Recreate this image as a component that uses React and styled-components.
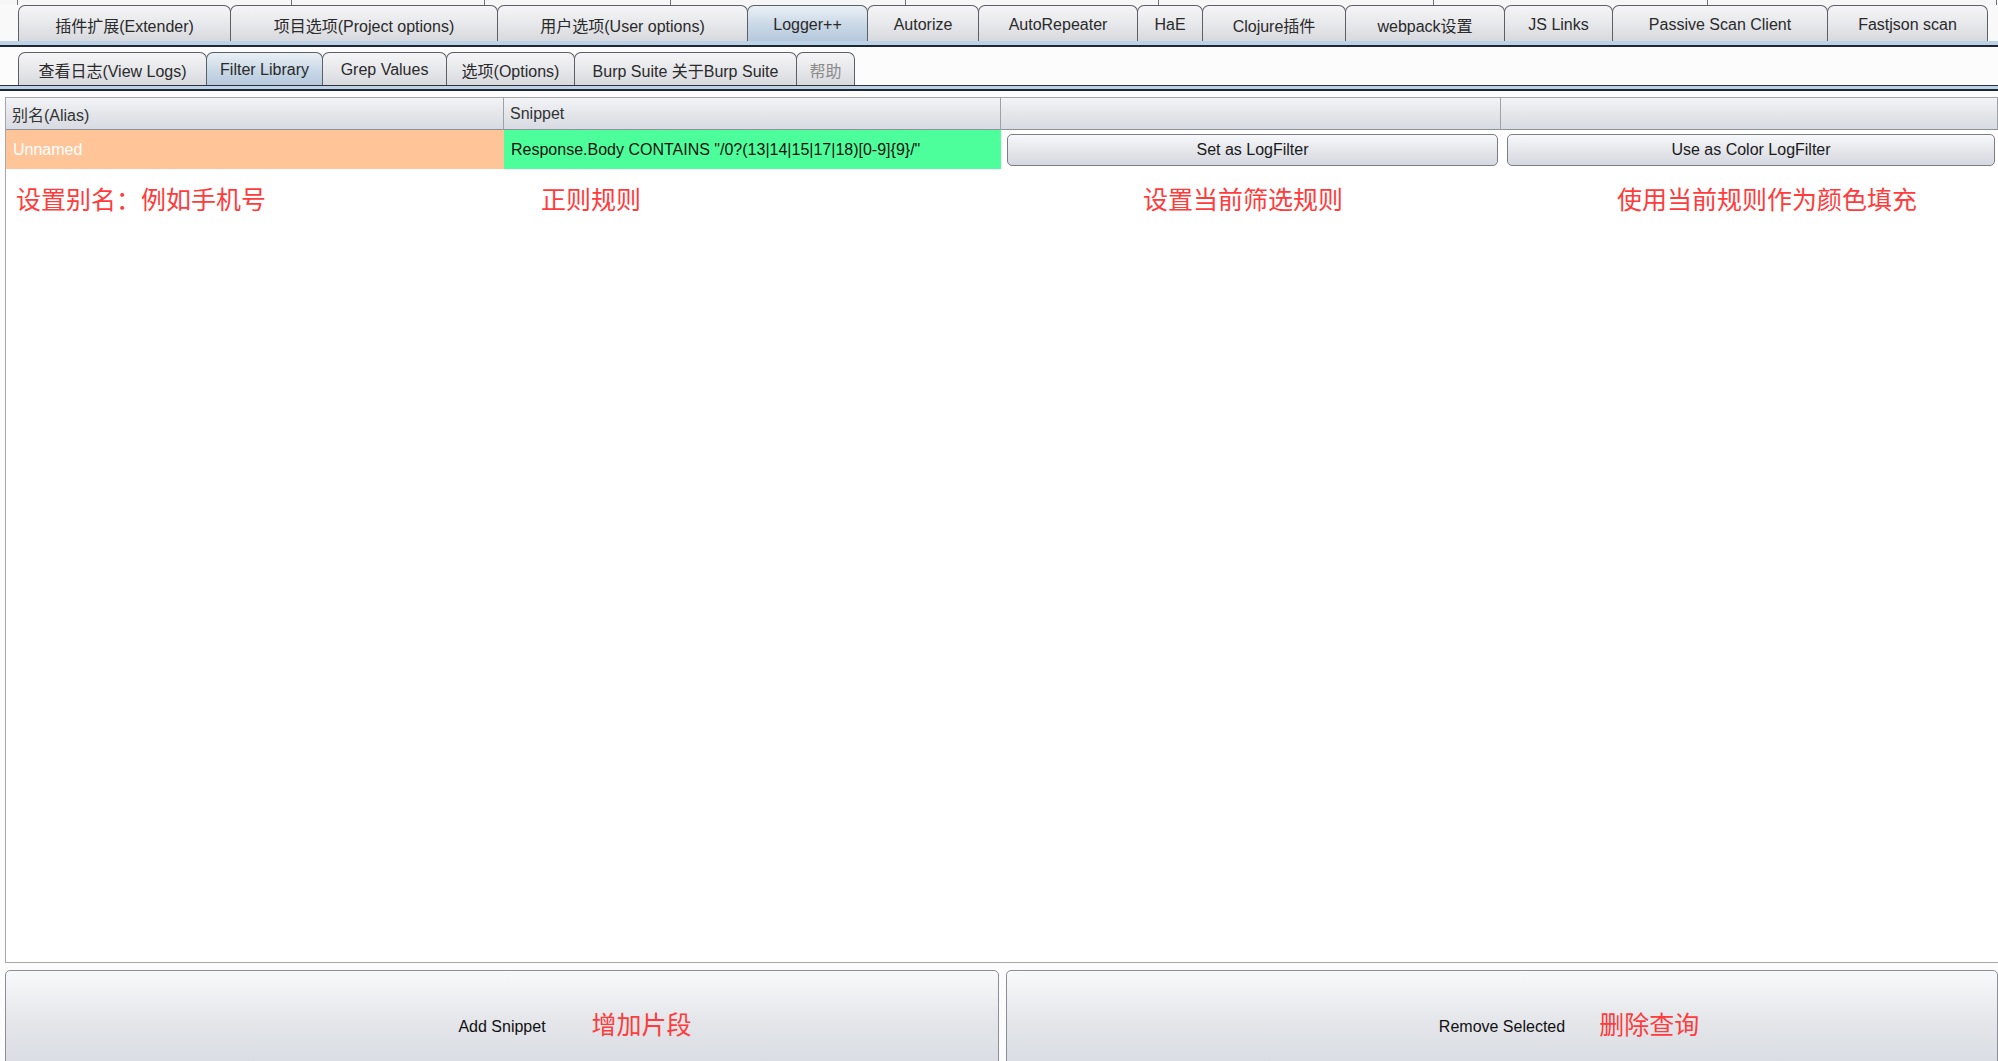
import React from "react";
import styled, { createGlobalStyle } from "styled-components";

const GlobalStyle = createGlobalStyle`
  html, body {
    margin: 0;
    padding: 0;
    background: #ffffff;
  }
  body {
    font-family: "Liberation Sans", "Noto Sans CJK SC", sans-serif;
    font-size: 16px;
    color: #222;
  }
  #root {
    height: 1061px;
    overflow: hidden;
  }
`;

const Page = styled.div`
  display: flex;
  flex-direction: column;
  height: 1061px;
  overflow: hidden;
  background: #fcfcfc;

  & > * {
    flex-shrink: 0;
  }
`;

// remnants of the tab row sitting behind the visible one
const BackRow = styled.div`
  display: flex;
  height: 5px;
  padding-left: 17px;
  background: #f6f6f6;
`;

const BackSeg = styled.span`
  width: ${(p) => p.$w}px;
  flex: none;
  border-left: 1px solid #6f7278;
`;

const TabRow = styled.div`
  display: flex;
  align-items: flex-end;
  height: 36px;
  padding-left: ${(p) => p.$pad || 18}px;
  background: ${(p) => p.$bg || "#f9f9f9"};
`;

const Tab = styled.div`
  box-sizing: border-box;
  flex: none;
  width: ${(p) => p.$w}px;
  height: 100%;
  margin-right: -1px;
  display: flex;
  align-items: center;
  justify-content: center;
  padding-top: 2px;
  border: 1px solid #5c6066;
  border-bottom: none;
  border-radius: 7px 7px 0 0;
  background: ${(p) =>
    p.$active
      ? "linear-gradient(#eaf0f5, #c9d8e6 55%, #b5c9dc)"
      : "linear-gradient(#f5f5f7, #e6e7ea 55%, #d8d9de)"};
  color: ${(p) => (p.$muted ? "#8a8a8a" : "#2a2a2a")};
  font-size: 16px;
  white-space: nowrap;
`;

const Band = styled.div`
  height: ${(p) => p.$h}px;
  background: #bcd3e7;
  border-top: ${(p) => (p.$top ? "1px solid #2b3340" : "none")};
  border-bottom: 2px solid #1f2733;
`;

const SubPanel = styled(TabRow)`
  height: 33px;
  padding-top: 5px;
  background: #fcfcfc;
`;

const Gap = styled.div`
  height: ${(p) => p.$h}px;
  background: #fdfdfd;
`;

const Table = styled.div`
  box-sizing: border-box;
  height: 866px;
  margin-left: 5px;
  border: 1px solid #a3a6ab;
  border-right: none;
  background: #ffffff;
  display: flex;
  flex-direction: column;
`;

const Columns = styled.div`
  display: grid;
  grid-template-columns: 498px 497px 500px 1fr;
  height: ${(p) => p.$h}px;
  flex: none;
`;

const HeaderCell = styled.div`
  box-sizing: border-box;
  display: flex;
  align-items: center;
  padding-left: ${(p) => p.$pad || 6}px;
  border-right: 1px solid #9ea1a8;
  border-bottom: 1px solid #8e9198;
  background: linear-gradient(#f3f4f6, #e4e6ea 50%, #d8dbe2);
  color: #333;
  font-size: 16px;
`;

const Cell = styled.div`
  box-sizing: border-box;
  display: flex;
  align-items: center;
  padding: ${(p) => (p.$button ? "4px 3px 3px 6px" : "0 0 0 7px")};
  background: ${(p) => p.$bg || "transparent"};
  color: ${(p) => p.$fg || "#111"};
  font-size: 16px;
  white-space: nowrap;
`;

const RowButton = styled.div`
  box-sizing: border-box;
  width: 100%;
  height: 100%;
  display: flex;
  align-items: center;
  justify-content: center;
  border: 1px solid #7a7d85;
  border-radius: 5px;
  background: linear-gradient(#f7f8fa, #e5e7eb 50%, #d5d8df);
  color: #1a1a1a;
  font-size: 16px;
`;

const Note = styled.div`
  padding: 14px 0 0 ${(p) => p.$indent}px;
  font-family: "Noto Sans CJK SC", sans-serif;
  font-size: 25px;
  line-height: 30px;
  color: #ff3b3b;
  white-space: nowrap;
`;

const Footer = styled.div`
  display: flex;
  gap: 7px;
  margin: 7px 0 0 5px;
  height: 114px;
`;

const BigButton = styled.div`
  box-sizing: border-box;
  flex: ${(p) => (p.$w ? `0 0 ${p.$w}px` : "1")};
  display: flex;
  align-items: center;
  justify-content: center;
  border: 1px solid #8b8e96;
  border-radius: 5px;
  background: linear-gradient(#f8f9fa, #e4e6ea 45%, #d4d8e0);
  color: #111;
  font-size: 16px;
`;

const BigLabel = styled.span`
  position: relative;
`;

const FootNote = styled.span`
  position: absolute;
  left: calc(100% + ${(p) => p.$gap}px);
  top: -10px;
  font-family: "Noto Sans CJK SC", sans-serif;
  font-size: 25px;
  line-height: 30px;
  color: #ff3b3b;
  white-space: nowrap;
`;

const backSegs = [273, 192, 185, 234, 252, 274, 273, 288, 1];

const topTabs = [
  { label: "插件扩展(Extender)", w: 213 },
  { label: "项目选项(Project options)", w: 268 },
  { label: "用户选项(User options)", w: 251 },
  { label: "Logger++", w: 121, active: true },
  { label: "Autorize", w: 112 },
  { label: "AutoRepeater", w: 160 },
  { label: "HaE", w: 66 },
  { label: "Clojure插件", w: 144 },
  { label: "webpack设置", w: 160 },
  { label: "JS Links", w: 109 },
  { label: "Passive Scan Client", w: 216 },
  { label: "Fastjson scan", w: 161 },
];

const subTabs = [
  { label: "查看日志(View Logs)", w: 189 },
  { label: "Filter Library", w: 117, active: true },
  { label: "Grep Values", w: 125 },
  { label: "选项(Options)", w: 129 },
  { label: "Burp Suite 关于Burp Suite", w: 223 },
  { label: "帮助", w: 59, muted: true },
];

const App = () => {
  return (
    <Page>
      <GlobalStyle />
      <BackRow>
        {backSegs.map((w, i) => (
          <BackSeg key={i} $w={w} />
        ))}
      </BackRow>
      <TabRow>
        {topTabs.map((t) => (
          <Tab key={t.label} $w={t.w} $active={t.active}>
            {t.label}
          </Tab>
        ))}
      </TabRow>
      <Band $h={4} />
      <SubPanel>
        {subTabs.map((t) => (
          <Tab key={t.label} $w={t.w} $active={t.active} $muted={t.muted}>
            {t.label}
          </Tab>
        ))}
      </SubPanel>
      <Band $h={3} $top />
      <Gap $h={6} />
      <Table>
        <Columns $h={32}>
          <HeaderCell>别名(Alias)</HeaderCell>
          <HeaderCell>Snippet</HeaderCell>
          <HeaderCell />
          <HeaderCell />
        </Columns>
        <Columns $h={39}>
          <Cell $bg="#ffc598" $fg="#ffffff">
            Unnamed
          </Cell>
          <Cell $bg="#4dff9b">
            Response.Body CONTAINS "/0?(13|14|15|17|18)[0-9]{"{9}"}/"
          </Cell>
          <Cell $button>
            <RowButton>Set as LogFilter</RowButton>
          </Cell>
          <Cell $button>
            <RowButton>Use as Color LogFilter</RowButton>
          </Cell>
        </Columns>
        <Columns $h={60}>
          <Note $indent={10}>设置别名：例如手机号</Note>
          <Note $indent={37}>正则规则</Note>
          <Note $indent={142}>设置当前筛选规则</Note>
          <Note $indent={116}>使用当前规则作为颜色填充</Note>
        </Columns>
      </Table>
      <Footer>
        <BigButton $w={994}>
          <BigLabel>
            Add Snippet
            <FootNote $gap={46}>增加片段</FootNote>
          </BigLabel>
        </BigButton>
        <BigButton>
          <BigLabel>
            Remove Selected
            <FootNote $gap={34}>删除查询</FootNote>
          </BigLabel>
        </BigButton>
      </Footer>
    </Page>
  );
};

export default App;
